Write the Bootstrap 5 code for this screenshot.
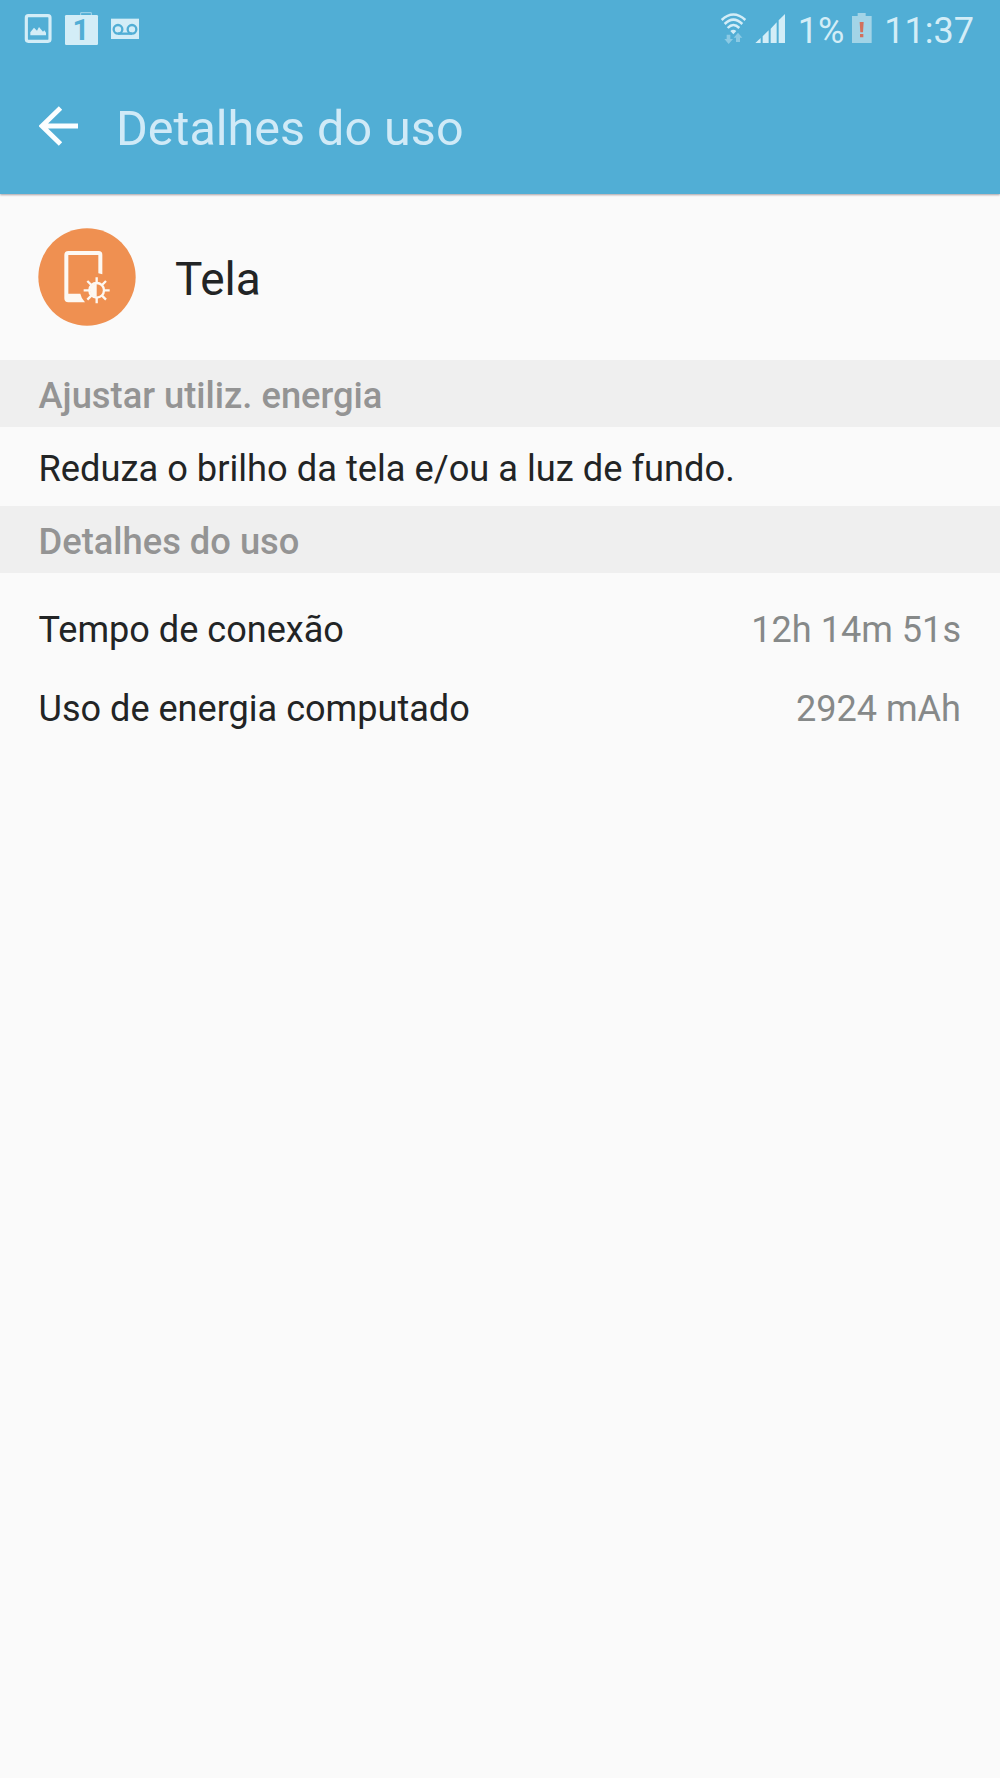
<!DOCTYPE html>
<html lang="pt-BR">
<head>
<meta charset="utf-8">
<meta name="viewport" content="width=device-width, initial-scale=1">
<title>Detalhes do uso</title>
<link href="https://cdn.jsdelivr.net/npm/bootstrap@5.3.0/dist/css/bootstrap.min.css" rel="stylesheet">
<style>
body{font-family:Roboto,"Noto Sans",sans-serif;background:#fafafa;color:#222425;font-size:36px;line-height:42px;min-height:1778px}
svg{display:block;flex:none}
.app-top{background:#51aed5;height:194px;box-shadow:0 1px 2px rgba(70,50,60,.45)}
.status-line{height:60px;padding:0 26px 0 24px;color:#d3edf7}
.status-line span{padding-top:2px}
.status-line .pct{margin-left:12px;margin-right:8px}
.status-line .clock{margin-left:12px}
.title-line{height:134px;padding:3px 39px 0}
.title-line svg{margin-top:-5px}
.title-line h1{font-size:48.5px;line-height:56px;font-weight:400;color:#d0eaf7;margin-left:38px}
.app-row{height:166px;padding:34px 38px 0}
.app-row .app-name{font-size:46px;line-height:54px;margin-left:39px;padding-top:24px}
.band{background:#efefef;color:#949494;font-weight:500;font-size:36.3px;height:67px;padding:15px 38.500px 0}
.hint{font-size:36.250px;height:79px;padding:21px 38.500px 0}
.usage{font-size:36.100px;padding:36px 39px 0 38.500px}
.usage .line{height:78.5px}
.usage .val{color:#868989}
</style>
</head>
<body>
<header class="app-top">
  <div class="status-line d-flex align-items-center justify-content-between">
    <div class="d-flex">
      <svg width="40" height="60" viewBox="72 0 120 180"><rect x="79" y="47" width="71" height="77" rx="6" fill="none" stroke="#d3edf7" stroke-width="9.5"/><path d="M91 106V97L102 83l9 9 6-11 12 14 4-4 5 7v8z" fill="#d3edf7"/></svg>
      <svg width="46" height="60" viewBox="192 0 138 180"><path d="M242 46V38h32v8" fill="none" stroke="#a6d7eb" stroke-width="3"/><rect x="195" y="45" width="99" height="90" rx="4" fill="#d3edf7"/><text x="243" y="121" text-anchor="middle" font-family="Roboto" font-weight="700" font-size="88" fill="#51aed5">1</text></svg>
      <svg width="30" height="60" viewBox="330 0 90 180"><rect x="333" y="56" width="84" height="61" fill="#d3edf7"/><g fill="none" stroke="#51aed5" stroke-width="7"><circle cx="354" cy="88" r="13"/><circle cx="396" cy="88" r="13"/><path d="M354 101H396"/></g></svg>
    </div>
    <div class="d-flex align-items-center">
      <svg width="27" height="60" viewBox="60 0 81 180"><g fill="none" stroke="#d3edf7" stroke-width="7.500"><path d="M65 60Q100 27 136 60"/><path d="M74 72Q100 46 127 72"/><path d="M83 84Q100 66 118 84"/></g><path d="M91 93Q100 86 109 93L100 103z" fill="#d3edf7"/><path d="M80 104h11v13h8L86 132 73 117h7zM108 126h12V113h7L114 98l-13 15h7z" fill="#8bcae4"/></svg>
      <svg class="ms-2" width="31" height="60" viewBox="167 0 93 180"><path d="M168 129L184 114V129zM190 129V109L208 91V129zM214 129V86L232 67V129zM238 129V61L257 42V129z" fill="#d3edf7"/></svg>
      <span class="pct">1%</span>
      <svg width="20" height="60" viewBox="37 0 60 180"><path d="M37 48H54V39H78V48H96V129H37z" fill="#a2d4e7"/><path d="M60 66H72L70 97H62zM61 102H71V112H61z" fill="#d2705c"/></svg>
      <span class="clock">11:37</span>
    </div>
  </div>
  <div class="title-line d-flex align-items-center">
    <svg width="39" height="40" viewBox="0 0 39 40"><path d="M21.500 2L3 20 21.500 38M3 20H39" fill="none" stroke="#fcfeff" stroke-width="4.800"/></svg>
    <h1 class="mb-0">Detalhes do uso</h1>
  </div>
</header>
<main>
  <section class="app-row d-flex align-items-start">
    <svg width="98" height="98" viewBox="54 53 294 294"><circle cx="201" cy="200" r="146" fill="#ef9051"/><path fill="#fdf8f2" fill-rule="evenodd" d="M145 122H236Q247 122 247 133V192L235 189V134H145V250H181Q184 265 195 276H145Q133 276 133 264V134Q133 122 145 122z"/><g stroke="#fdf8f2" stroke-width="7"><path d="M230 201V218M230 262V279M191 240H208M252 240H269M202 212L214 224M246 256L258 268M258 212L246 224M214 256L202 268"/><circle cx="230" cy="240" r="22" fill="none" stroke-width="7"/></g><path d="M230 220A20 20 0 0 0 230 260z" fill="#fdf8f2"/></svg>
    <div class="app-name">Tela</div>
  </section>
  <div class="band">Ajustar utiliz. energia</div>
  <div class="hint">Reduza o brilho da tela e/ou a luz de fundo.</div>
  <div class="band">Detalhes do uso</div>
  <section class="usage">
    <div class="line d-flex justify-content-between"><span>Tempo de conexão</span><span class="val">12h 14m 51s</span></div>
    <div class="line d-flex justify-content-between"><span>Uso de energia computado</span><span class="val">2924 mAh</span></div>
  </section>
</main>
<script src="https://cdn.jsdelivr.net/npm/bootstrap@5.3.0/dist/js/bootstrap.bundle.min.js"></script>
</body>
</html>
